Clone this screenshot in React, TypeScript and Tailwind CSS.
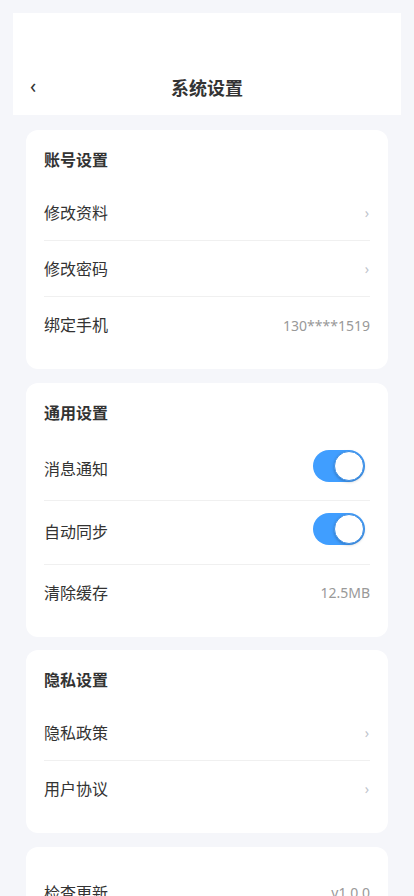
import { useState } from 'react';

type Row =
  | { label: string; kind: 'link' }
  | { label: string; kind: 'value'; value: string }
  | { label: string; kind: 'toggle'; key: string };

const sections: { title?: string; rows: Row[] }[] = [
  {
    title: '账号设置',
    rows: [
      { label: '修改资料', kind: 'link' },
      { label: '修改密码', kind: 'link' },
      { label: '绑定手机', kind: 'value', value: '130****1519' },
    ],
  },
  {
    title: '通用设置',
    rows: [
      { label: '消息通知', kind: 'toggle', key: 'notify' },
      { label: '自动同步', kind: 'toggle', key: 'sync' },
      { label: '清除缓存', kind: 'value', value: '12.5MB' },
    ],
  },
  {
    title: '隐私设置',
    rows: [
      { label: '隐私政策', kind: 'link' },
      { label: '用户协议', kind: 'link' },
    ],
  },
  {
    rows: [{ label: '检查更新', kind: 'value', value: 'v1.0.0' }],
  },
];

const Toggle = ({ on, onChange }: { on: boolean; onChange: () => void }) => (
  <button
    onClick={onChange}
    className={`relative w-[52px] h-[32px] rounded-full transition-colors ${on ? 'bg-[#409eff]' : 'bg-[#e5e5e5]'}`}
  >
    <span
      className={`absolute top-[1px] w-[30px] h-[30px] rounded-full bg-white border border-[#3d8fe6] shadow-[0_1px_3px_rgba(0,0,0,0.25)] transition-all ${on ? 'left-[21px]' : 'left-[1px]'}`}
    />
  </button>
);

export default function App() {
  const [toggles, setToggles] = useState<Record<string, boolean>>({ notify: true, sync: true });

  return (
    <div
      className="min-h-screen bg-[#f5f6fa] pt-[13px] pb-6 text-[#333]"
      style={{ fontFamily: '"Noto Sans", "Noto Sans CJK SC", sans-serif' }}
    >
      <div className="mx-[13px] bg-white h-[102px] pt-[51px]">
        <div className="relative h-12 flex items-center justify-center">
          <button className="absolute left-[17px] top-[10px] text-[20px] leading-6 text-[#333]">‹</button>
          <h1 className="text-[18px] font-bold leading-6">系统设置</h1>
        </div>
      </div>

      <div className="mx-[26px] mt-[15px] flex flex-col gap-[13.5px]">
        {sections.map((section, i) => (
          <div key={i} className="bg-white rounded-xl px-[18px] pt-[18px] pb-4">
            {section.title && (
              <div className="text-base font-bold leading-6 mb-[13px]">{section.title}</div>
            )}
            {section.rows.map((row, j) => {
              const last = j === section.rows.length - 1;
              return (
                <div
                  key={row.label}
                  className={`flex items-center justify-between ${row.kind === 'toggle' ? 'h-[63.5px]' : 'h-14'} ${last ? '' : 'border-b border-[#f0f0f0]'}`}
                >
                  <span className="text-base leading-6">{row.label}</span>
                  {row.kind === 'link' && (
                    <span className="text-[14px] text-[#c0c4cc] leading-none pr-[1px]">›</span>
                  )}
                  {row.kind === 'value' && (
                    <span className="text-[14px] text-[#999]">{row.value}</span>
                  )}
                  {row.kind === 'toggle' && (
                    <div className="mr-[5px]">
                      <Toggle
                        on={toggles[row.key]}
                        onChange={() => setToggles((t) => ({ ...t, [row.key]: !t[row.key] }))}
                      />
                    </div>
                  )}
                </div>
              );
            })}
          </div>
        ))}
      </div>
    </div>
  );
}
